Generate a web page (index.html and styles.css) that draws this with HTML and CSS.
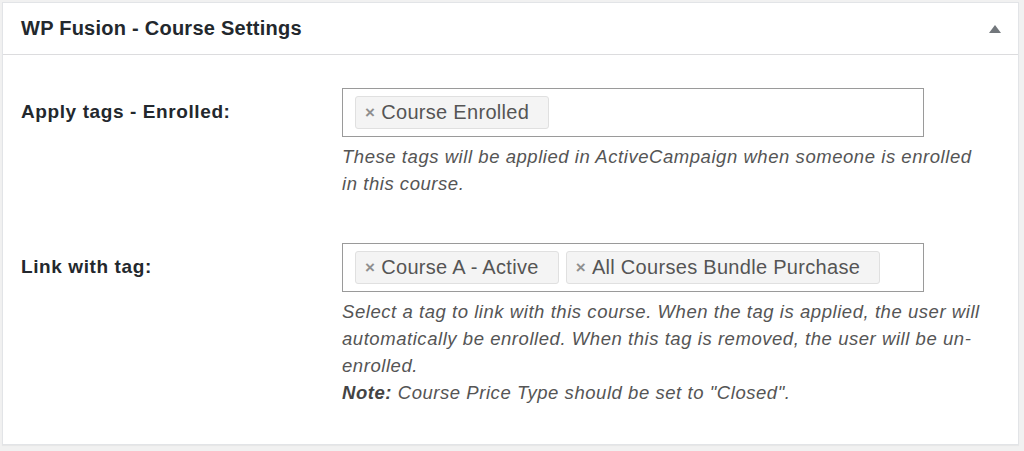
FILE: index.html
```html
<!DOCTYPE html>
<html lang="en">
<head>
    <meta charset="UTF-8">
    <title>WP Fusion - Course Settings</title>
    <link rel="stylesheet" href="styles.css">
</head>
<body>
    <div class="postbox">
        <div class="postbox-header">
            <h2>WP Fusion - Course Settings</h2>
            <button class="toggle" aria-label="Toggle panel">
                <svg width="12" height="8" viewBox="0 0 12 8"><polygon points="6,0 12,8 0,8" fill="#72777c"/></svg>
            </button>
        </div>

        <div class="inside">
            <div class="field-row">
                <label class="field-label">Apply tags - Enrolled:</label>
                <div class="field">
                    <div class="select-box">
                        <span class="chip"><span class="chip-x">×</span>Course Enrolled</span>
                    </div>
                    <p class="description">These tags will be applied in ActiveCampaign when someone is enrolled in this course.</p>
                </div>
            </div>

            <div class="field-row">
                <label class="field-label">Link with tag:</label>
                <div class="field">
                    <div class="select-box">
                        <span class="chip"><span class="chip-x">×</span>Course A - Active</span>
                        <span class="chip"><span class="chip-x">×</span>All Courses Bundle Purchase</span>
                    </div>
                    <p class="description">Select a tag to link with this course. When the tag is applied, the user will automatically be enrolled. When this tag is removed, the user will be un-enrolled.<br><strong>Note:</strong> Course Price Type should be set to "Closed".</p>
                </div>
            </div>
        </div>
    </div>
</body>
</html>
```

FILE: styles.css
```css
body {
    margin: 0;
    padding: 2px 5px 4px 2px;
    background-color: #f1f1f1;
    font-family: "Liberation Sans", Arial, sans-serif;
    color: #23282d;
}

.postbox {
    background: #fff;
    border: 1px solid #e2e4e7;
    box-shadow: 0 1px 1px rgba(0, 0, 0, 0.04);
    height: 443px;
    box-sizing: border-box;
}

.postbox-header {
    display: flex;
    align-items: center;
    justify-content: space-between;
    height: 51px;
    padding: 0 17px 0 18px;
    border-bottom: 1px solid #dcdcde;
}

.postbox-header h2 {
    margin: 0;
    font-size: 20px;
    font-weight: bold;
    letter-spacing: 0.25px;
}

.toggle {
    background: none;
    border: none;
    padding: 0;
    display: flex;
    cursor: pointer;
}

.inside {
    padding: 33px 18px 0 18px;
}

.field-row {
    display: grid;
    grid-template-columns: 321px 1fr;
    margin-bottom: 46px;
}

.field-label {
    font-size: 19px;
    font-weight: bold;
    letter-spacing: 0.6px;
    padding-top: 13px;
}

.select-box {
    display: flex;
    gap: 7px;
    width: 582px;
    height: 49px;
    box-sizing: border-box;
    padding: 7px 12px;
    border: 1px solid #9a9a9a;
}

.chip {
    display: inline-flex;
    align-items: center;
    height: 33px;
    box-sizing: border-box;
    padding: 0 19px 0 9px;
    background: #f4f4f4;
    border: 1px solid #e0e0e0;
    border-radius: 3px;
    font-size: 20px;
    letter-spacing: 0.3px;
    color: #555;
}

.chip-x {
    font-weight: bold;
    font-size: 17px;
    color: #8f8f8f;
    margin-right: 6px;
}

.description {
    width: 646px;
    margin: 6px 0 0;
    font-size: 18.5px;
    letter-spacing: 0.55px;
    line-height: 27px;
    font-style: italic;
    color: #555;
}

.description strong {
    color: #444;
}
```
